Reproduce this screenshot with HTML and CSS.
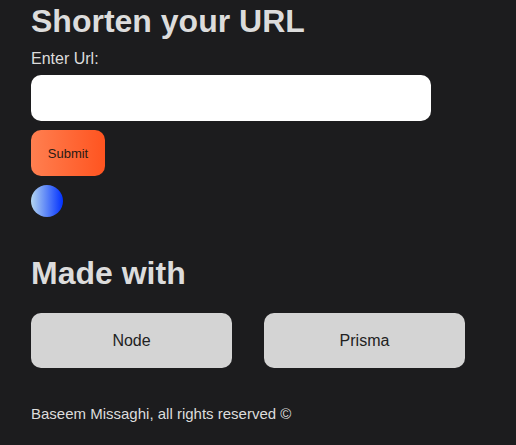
FILE: index.html
```html
<!DOCTYPE html>
<html>
<head>
<meta charset="utf-8">
<link rel="stylesheet" href="styles.css">
</head>
<body>
<main class="page">
  <h1 class="title">Shorten your URL</h1>
  <form class="form">
    <label class="label" for="url">Enter Url:</label>
    <input class="input" id="url" type="text">
    <button class="submit" type="button">Submit</button>
  </form>
  <div class="spinner"></div>
  <h2 class="subtitle">Made with</h2>
  <div class="tech">
    <div class="card">Node</div>
    <div class="card">Prisma</div>
  </div>
  <footer class="footer">Baseem Missaghi, all rights reserved ©</footer>
</main>
</body>
</html>
```
FILE: styles.css
```css
html, body {
  margin: 0;
  padding: 0;
  background: #1c1c1e;
  height: 100%;
}
.page {
  font-family: "Liberation Sans", Arial, sans-serif;
  color: #dcdcdc;
  padding: 3px 31px 0;
  display: flex;
  flex-direction: column;
  align-items: flex-start;
}
.title {
  margin: 0;
  font-size: 32px;
  font-weight: bold;
  line-height: 37px;
}
.form {
  display: flex;
  flex-direction: column;
  align-items: flex-start;
  margin-top: 10px;
}
.label {
  font-size: 16px;
  line-height: 17px;
}
.input {
  margin-top: 8px;
  width: 400px;
  height: 46px;
  box-sizing: border-box;
  border: none;
  border-radius: 10px;
  background: #fff;
}
.submit {
  margin-top: 9px;
  width: 74px;
  height: 46px;
  border: none;
  border-radius: 10px;
  background: linear-gradient(to right, #ff7f50, #ff5420);
  color: #2a1a14;
  font-family: "Liberation Sans", Arial, sans-serif;
  font-size: 13px;
}
.spinner {
  margin-top: 9px;
  width: 32px;
  height: 32px;
  border-radius: 50%;
  background: linear-gradient(to right, #b4d6f0, #0030ff);
}
.subtitle {
  margin: 38px 0 0;
  font-size: 32px;
  font-weight: bold;
  line-height: 37px;
}
.tech {
  display: flex;
  gap: 32px;
  margin-top: 21px;
}
.card {
  width: 201px;
  height: 55px;
  border-radius: 10px;
  background: #d4d4d4;
  color: #222;
  font-size: 16px;
  display: flex;
  align-items: center;
  justify-content: center;
}
.footer {
  margin-top: 37px;
  font-size: 15px;
  line-height: 17px;
}
```
